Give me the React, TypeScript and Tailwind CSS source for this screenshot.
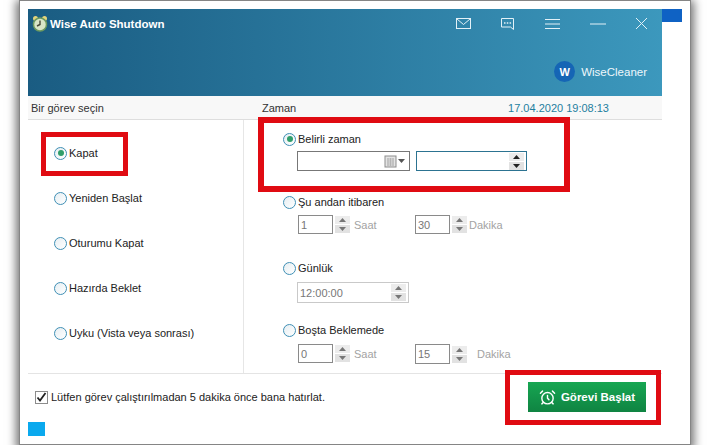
import { AlarmClock } from "lucide-react";

function Radio({ label, checked, className = "" }: { label: string; checked?: boolean; className?: string }) {
  return (
    <div className={`flex items-center gap-[2px] ${className}`}>
      <span className="flex h-[13px] w-[13px] items-center justify-center rounded-full border border-[#3f8fb5] bg-gradient-to-br from-[#e6eef2] to-white">
        {checked && <span className="h-[6px] w-[6px] rounded-full bg-[#2f9e6a]" />}
      </span>
      <span className="text-[#222]">{label}</span>
    </div>
  );
}

function Spin({ dark, className = "" }: { dark?: boolean; className?: string }) {
  const arrow = dark ? "#222" : "#777";
  return (
    <span className={`flex w-[15px] flex-col gap-[1px] ${className}`}>
      <span className="flex h-[8px] items-center justify-center bg-[#ececec]">
        <svg width="7" height="4" viewBox="0 0 7 4"><path d="M3.5 0 7 4H0z" fill={arrow} /></svg>
      </span>
      <span className="flex h-[8px] items-center justify-center bg-[#e2e2e2]">
        <svg width="7" height="4" viewBox="0 0 7 4"><path d="M0 0h7L3.5 4z" fill={arrow} /></svg>
      </span>
    </span>
  );
}

function NumberField({ value, unit, unitClass = "ml-[4px]", tall }: { value: string; unit: string; unitClass?: string; tall?: boolean }) {
  return (
    <div className="flex items-center">
      <span className={`flex w-[35px] items-center border border-[#8a8a8a] pl-[2px] text-[#777] ${tall ? "h-[20px]" : "h-[19px]"}`}>
        {value}
      </span>
      <Spin className="ml-[2px]" />
      <span className={`text-[#a3a3a3] ${unitClass}`}>{unit}</span>
    </div>
  );
}

function CalendarIcon() {
  return (
    <svg width="13" height="13" viewBox="0 0 13 13">
      <rect x="1" y="1" width="11" height="11" fill="#e4e4e4" stroke="#8d8d8d" />
      <path d="M3 4h7M3 6h7M3 8h7M3 10h7M4 3v8M6.5 3v8M9 3v8" stroke="#a9a9a9" strokeWidth="0.7" />
    </svg>
  );
}

function AppIcon() {
  return (
    <svg width="16" height="17" viewBox="0 0 16 17">
      <circle cx="3.5" cy="3.5" r="2.5" fill="#e4d47c" />
      <circle cx="12.5" cy="3.5" r="2.5" fill="#e4d47c" />
      <circle cx="8" cy="9.5" r="6.5" fill="#d9e6c7" stroke="#6d9a5f" strokeWidth="1.5" />
      <path d="M8 5.5v4l-3 1.5" stroke="#4a4a3a" strokeWidth="1.4" fill="none" />
    </svg>
  );
}

function HeaderIcons() {
  return (
    <div className="flex items-center text-[#e3f1f7]">
      <svg className="mr-[30px]" width="15" height="11" viewBox="0 0 15 11" fill="none" stroke="currentColor">
        <rect x="0.5" y="0.5" width="14" height="10" />
        <path d="m1 1 6.5 5.5L14 1" />
      </svg>
      <svg className="mr-[31px]" width="13" height="12" viewBox="0 0 13 12" fill="none" stroke="currentColor">
        <path d="M0.5 0.5h12v11l-3-2.5h-9z" />
        <path d="M3 5h1.5M5.8 5h1.5M8.6 5h1.5" strokeWidth="1.5" />
      </svg>
      <svg className="mr-[30px]" width="15" height="10" viewBox="0 0 15 10" stroke="currentColor">
        <path d="M0 .5h15M0 5h15M0 9.5h15" />
      </svg>
      <svg className="mr-[30px]" width="16" height="2" viewBox="0 0 16 2" stroke="currentColor">
        <path d="M0 1h16" />
      </svg>
      <svg width="11" height="11" viewBox="0 0 11 11" stroke="currentColor">
        <path d="m0 0 11 11M11 0 0 11" />
      </svg>
    </div>
  );
}

export default function App() {
  return (
    <div className="relative h-[445px] w-[710px] overflow-hidden bg-white font-['Liberation_Sans',sans-serif] text-[11px] leading-[14px]">
      <div className="ml-[19px] h-[445px] w-[672px] border border-[#858585] bg-white pl-[8px] pt-[8px] shadow-[0_3px_9px_3px_rgba(0,0,0,0.55)]">
        <div className="relative w-[634px]">
          {/* small blue tab sticking out past the header */}
          <div className="absolute left-[634px] top-0 h-[13px] w-[20px] bg-[#0f62c4]" />

          <header className="flex h-[87px] flex-col justify-between bg-gradient-to-r from-[#1a5c82] to-[#3c98bd] pb-[14px] pl-[4px] pr-[15px] pt-[6px]">
            <div className="flex items-center justify-between">
              <div className="flex items-center gap-[2px]">
                <AppIcon />
                <span className="text-[11.5px] font-bold text-white">Wise Auto Shutdown</span>
              </div>
              <HeaderIcons />
            </div>
            <div className="flex items-center justify-end gap-[6px]">
              <span className="flex h-[21px] w-[21px] items-center justify-center rounded-full bg-[#1565b5] text-[11px] font-bold text-white">W</span>
              <span className="text-[11.5px] text-[#eef7fb]">WiseCleaner</span>
            </div>
          </header>

          <div className="flex h-[24px] items-center border-b border-[#dedede] bg-[#f8f8f8]">
            <div className="w-[216px] pl-[3px] text-[#333]">Bir görev seçin</div>
            <div className="flex w-[418px] justify-between pl-[18px] pr-[53px]">
              <span className="text-[#333]">Zaman</span>
              <span className="text-[#1f7f9f]">17.04.2020 19:08:13</span>
            </div>
          </div>

          <div className="flex h-[254px] border-b border-[#e4e4e4]">
            <div className="flex w-[216px] flex-col gap-[31px] border-r border-[#e6e6e6] pl-[26px] pt-[26px]">
              <Radio checked label="Kapat" />
              <Radio label="Yeniden Başlat" />
              <Radio label="Oturumu Kapat" />
              <Radio label="Hazırda Beklet" />
              <Radio label="Uyku (Vista veya sonrası)" />
            </div>

            <div className="flex flex-col pl-[39px] pt-[12px]">
              <Radio checked label="Belirli zaman" />
              <div className="ml-[14px] mt-[5px] flex gap-[6px]">
                <span className="flex h-[20px] w-[113px] items-center justify-end gap-[1px] border border-[#777] pr-[4px]">
                  <CalendarIcon />
                  <svg width="7" height="4" viewBox="0 0 7 4"><path d="M0 0h7L3.5 4z" fill="#555" /></svg>
                </span>
                <span className="flex h-[20px] w-[111px] items-center justify-end border border-[#2c7391] pr-[2px]">
                  <Spin dark />
                </span>
              </div>

              <Radio label="Şu andan itibaren" className="mt-[24px]" />
              <div className="ml-[15px] mt-[6px] flex gap-[0px]">
                <div className="w-[117px]"><NumberField value="1" unit="Saat" /></div>
                <NumberField value="30" unit="Dakika" unitClass="ml-[2px]" />
              </div>

              <Radio label="Günlük" className="mt-[27px]" />
              <span className="ml-[14px] mt-[7px] flex h-[21px] w-[112px] items-center justify-between border border-[#c9c9c9] pl-[2px] pr-[2px] text-[#777]">
                12:00:00
                <Spin />
              </span>

              <Radio label="Boşta Beklemede" className="mt-[20px]" />
              <div className="ml-[15px] mt-[7px] flex">
                <div className="w-[117px]"><NumberField value="0" unit="Saat" /></div>
                <NumberField value="15" unit="Dakika" unitClass="ml-[10px]" tall />
              </div>
            </div>
          </div>

          <div className="flex h-[62px] items-start justify-between pl-[7px] pr-[16px] pt-[8px]">
            <div className="mt-[8px] flex items-center gap-[3px]">
              <span className="flex h-[13px] w-[13px] items-center justify-center border border-[#8c8c8c] bg-white">
                <svg width="11" height="10" viewBox="0 0 11 10" fill="none" stroke="#222" strokeWidth="1.8">
                  <path d="m1.5 5.5 2.5 3L9.5 1" />
                </svg>
              </span>
              <span className="text-[#222]">Lütfen görev çalıştırılmadan 5 dakika önce bana hatırlat.</span>
            </div>
            <button className="flex h-[30px] w-[118px] items-center justify-center gap-[5px] bg-gradient-to-b from-[#17a652] to-[#0f8442] text-[11.5px] font-bold text-white">
              <AlarmClock size={17} strokeWidth={2} />
              Görevi Başlat
            </button>
          </div>

          <div className="mt-[-14px] h-[14px] w-[17px] bg-[#0aa9ee]" />

          {/* red annotation frames drawn over the screenshot */}
          <div className="absolute left-[13px] top-[123px] h-[44px] w-[87px] border-[5px] border-[#e00b12]" />
          <div className="absolute left-[230px] top-[108px] h-[75px] w-[312px] border-[6px] border-[#e00b12]" />
          <div className="absolute left-[477px] top-[361px] h-[55px] w-[156px] border-[5px] border-[#e00b12]" />
        </div>
      </div>
    </div>
  );
}
